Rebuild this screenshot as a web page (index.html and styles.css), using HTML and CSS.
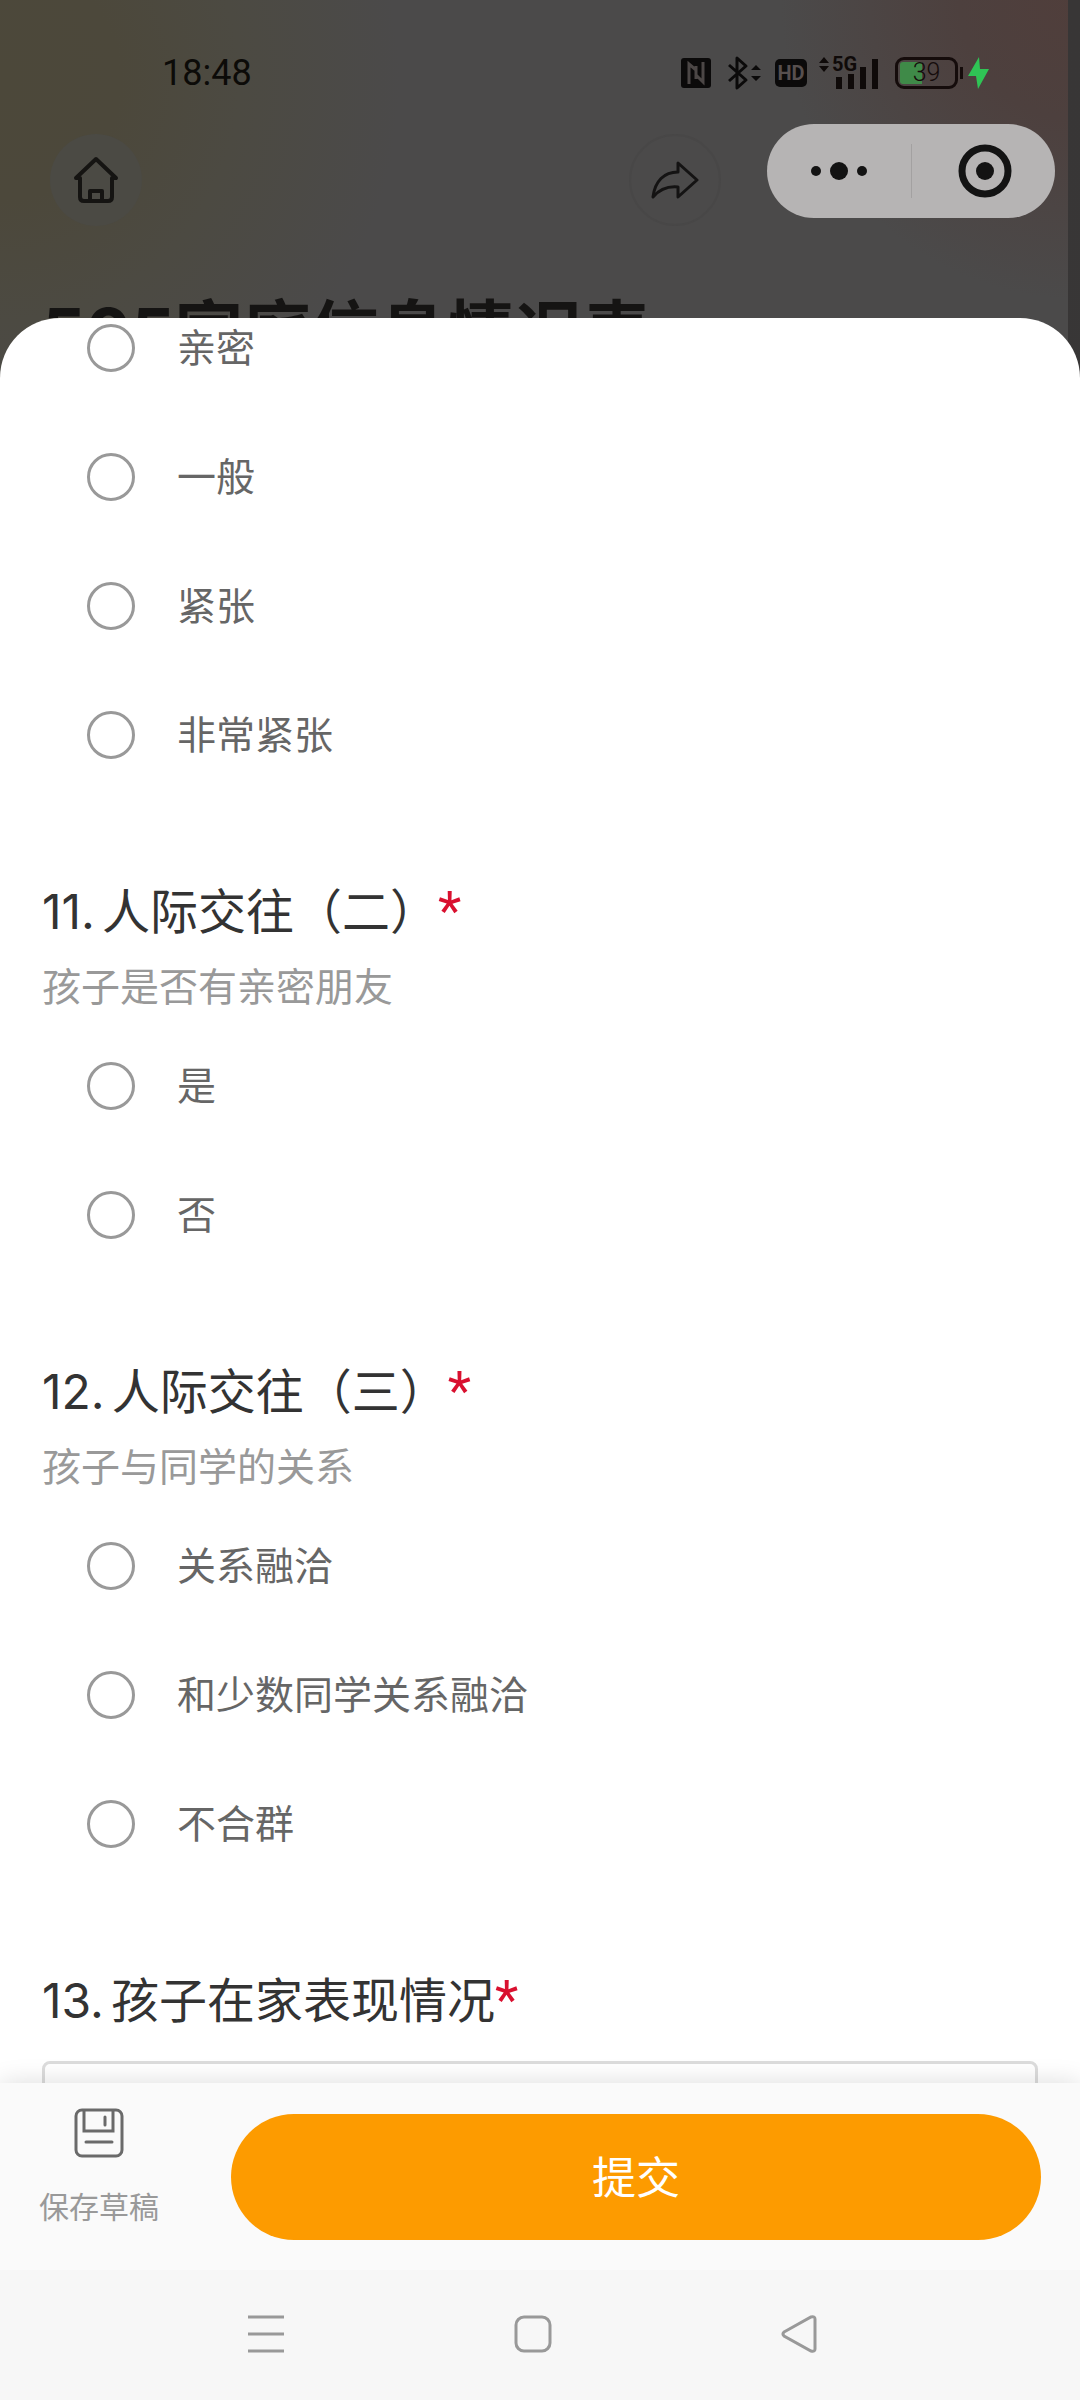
FILE: index.html
```html
<!DOCTYPE html>
<html lang="zh-CN">
<head>
<meta charset="utf-8">
<meta name="viewport" content="width=device-width, initial-scale=1">
<title>505家庭信息情况表</title>
<link rel="stylesheet" href="styles.css">
</head>
<body>
<header class="header">
  <div class="status">
    <time class="clock">18:48</time>
    <div class="indicators">
      <svg class="nfc" width="30" height="30" viewBox="0 0 30 30"><rect width="30" height="30" rx="3" fill="#0b0a0a"/><path d="M8 26V6l7 6v9M22 4v20l-7-7V8" fill="none" stroke="#4c4746" stroke-width="3"/></svg>
      <svg class="bluetooth" width="32" height="34" viewBox="0 0 32 34"><path d="M1 9l17 15-9 8V2l9 8L1 25" fill="none" stroke="#0b0a0a" stroke-width="3" stroke-linejoin="round"/><path d="M23 14l5-5 5 5zM23 20l5 5 5-5z" fill="#0b0a0a"/></svg>
      <span class="hd">HD</span>
      <span class="signal">
        <svg width="62" height="34" viewBox="0 0 62 34"><path d="M1 7l5-6 5 6zM1 10l5 6 5-6z" fill="#0f0a09"/><path d="M18 21h6v12h-6zM30 18h6v15h-6zM42 11h6v22h-6zM54 3h6v30h-6z" fill="#0f0a09"/></svg>
        <span class="network">5G</span>
      </span>
      <span class="battery"><span class="level">39</span></span>
      <svg class="bolt" width="22" height="32" viewBox="0 0 22 32"><path d="M11 0L0 19h8l2 13 11-20h-9z" fill="#2fc455"/></svg>
    </div>
  </div>
  <div class="toolbar">
    <button class="round home" type="button" aria-label="首页">
      <svg width="48" height="48" viewBox="0 0 48 48" fill="none" stroke="#151412" stroke-width="4" stroke-linecap="round" stroke-linejoin="round"><path d="M8 22H4L24 3l20 19h-4M8 22v19q0 4 4 4h24q4 0 4-4V22M18 45V35h12v10"/></svg>
    </button>
    <div class="tools">
      <button class="round share" type="button" aria-label="分享">
        <svg width="48" height="40" viewBox="0 0 48 40" fill="none" stroke="#141313" stroke-width="3" stroke-linejoin="round"><path d="M27 3l19 17-19 17V27C17 26 8 30 2 37 4 21 13 12 27 12z"/></svg>
      </button>
      <div class="capsule">
        <button class="half" type="button" aria-label="更多"><svg width="60" height="60" viewBox="0 0 60 60" fill="#131313"><circle cx="7" cy="30" r="5"/><circle cx="30" cy="30" r="9"/><circle cx="53" cy="30" r="5"/></svg></button>
        <button class="half" type="button" aria-label="关闭"><svg width="60" height="60" viewBox="0 0 60 60"><circle cx="32" cy="30" r="23" fill="none" stroke="#131313" stroke-width="7"/><circle cx="32" cy="30" r="9" fill="#131313"/></svg></button>
      </div>
    </div>
  </div>
  <h1 class="title">505家庭信息情况表</h1>
</header>

<form class="sheet">
  <div class="questions">
    <fieldset class="question">
      <label class="option"><input type="radio" name="q10"><span>亲密</span></label>
      <label class="option"><input type="radio" name="q10"><span>一般</span></label>
      <label class="option"><input type="radio" name="q10"><span>紧张</span></label>
      <label class="option"><input type="radio" name="q10"><span>非常紧张</span></label>
    </fieldset>
    <fieldset class="question">
      <legend class="heading"><span class="number">11.</span>人际交往（二）<span class="required">*</span></legend>
      <p class="hint">孩子是否有亲密朋友</p>
      <label class="option"><input type="radio" name="q11"><span>是</span></label>
      <label class="option"><input type="radio" name="q11"><span>否</span></label>
    </fieldset>
    <fieldset class="question">
      <legend class="heading"><span class="number">12.</span>人际交往（三）<span class="required">*</span></legend>
      <p class="hint">孩子与同学的关系</p>
      <label class="option"><input type="radio" name="q12"><span>关系融洽</span></label>
      <label class="option"><input type="radio" name="q12"><span>和少数同学关系融洽</span></label>
      <label class="option"><input type="radio" name="q12"><span>不合群</span></label>
    </fieldset>
    <div class="question">
      <label class="heading" for="q13"><span class="number">13.</span>孩子在家表现情况<span class="required">*</span></label>
      <textarea class="answer" id="q13"></textarea>
    </div>
  </div>
  <div class="actions">
    <button class="draft" type="button">
      <svg width="50" height="50" viewBox="0 0 50 50" fill="none" stroke="#6a6a6a" stroke-width="3" stroke-linecap="round"><rect x="2" y="2" width="46" height="46" rx="6"/><path d="M10 3v20h29V3M31 9v8M12 34h26"/></svg>
      <span>保存草稿</span>
    </button>
    <button class="submit" type="submit">提交</button>
  </div>
</form>

<nav class="system">
  <button type="button" aria-label="最近任务"><svg width="40" height="40" viewBox="0 0 40 40" stroke="#999" stroke-width="3"><path d="M2 3h36M2 20h36M2 37h36"/></svg></button>
  <button type="button" aria-label="主屏幕"><svg width="40" height="40" viewBox="0 0 40 40" fill="none" stroke="#999" stroke-width="3"><rect x="3" y="3" width="34" height="34" rx="8"/></svg></button>
  <button type="button" aria-label="返回"><svg width="40" height="40" viewBox="0 0 40 40" fill="none" stroke="#999" stroke-width="3"><path d="M4 18L31 3q4-1 4 2v30q0 3-4 2L4 22q-2-2 0-4z"/></svg></button>
</nav>
</body>
</html>
```
FILE: styles.css
```css
* {
  box-sizing: border-box;
}

body {
  margin: 0;
  height: 100vh;
  display: flex;
  flex-direction: column;
  overflow: hidden;
  font-family: "Noto Sans CJK SC", sans-serif;
  font-weight: 400;
  color: #333;
  background:
    linear-gradient(#383636, #383838) right / 12px 100% no-repeat,
    radial-gradient(circle at 0 80px, #4c483a 0, #4c483b 120px, #4c4a42 240px, rgba(75, 75, 75, 0) 400px),
    radial-gradient(circle at 100% 0, #503e3b 0, #4d403e 120px, rgba(75, 74, 74, 0) 300px),
    #4b4a4a;
}

button {
  padding: 0;
  border: 0;
  background: none;
  font: inherit;
  color: inherit;
}

svg {
  display: block;
}

.header {
  height: 318px;
  flex: none;
}

.status {
  height: 124px;
  padding: 21px 90px 0 162px;
  display: flex;
  align-items: center;
  justify-content: space-between;
}

.clock {
  font: 400 36px/40px Roboto, sans-serif;
  color: #0c0b08;
}

.indicators {
  display: flex;
  align-items: center;
}

.bluetooth {
  margin: 0 15px 0 17px;
  overflow: visible;
}

.hd {
  width: 32px;
  border-radius: 5px;
  background: #0b0a0a;
  color: #574f4e;
  font: 700 20px/28px Roboto, sans-serif;
  text-align: center;
}

.signal {
  position: relative;
  margin: 0 15px 0 11px;
}

.network {
  position: absolute;
  left: 14px;
  top: -2px;
  font: 700 20px/20px Roboto, sans-serif;
  color: #0f0a09;
}

.battery {
  position: relative;
  width: 63px;
  height: 32px;
  padding: 2px;
  border: 3px solid #150c0b;
  border-radius: 9px;
}

.battery::after {
  content: "";
  position: absolute;
  right: -8px;
  top: 7px;
  width: 3px;
  height: 12px;
  background: #150c0b;
}

.level {
  display: block;
  border-radius: 3px;
  background: linear-gradient(#3f8a48, #3f8a48) left / 22px 100% no-repeat;
  color: #150c0b;
  font: 300 25px/22px Roboto, sans-serif;
  text-align: center;
}

.bolt {
  margin-left: 10px;
}

.toolbar {
  height: 94px;
  padding: 0 25px 0 50px;
  display: flex;
  align-items: center;
  justify-content: space-between;
}

.round {
  width: 92px;
  height: 92px;
  margin-top: 18px;
  border-radius: 50%;
  display: grid;
  place-items: center;
}

.home {
  background: #4b4a44;
}

.share {
  border: 2px solid #484747;
}

.tools {
  display: flex;
  align-items: center;
  gap: 46px;
}

.capsule {
  width: 288px;
  height: 94px;
  display: flex;
  border-radius: 47px;
  background: #b6b4b4;
}

.half {
  flex: 1;
  display: grid;
  place-items: center;
}

.half + .half {
  position: relative;
}

.half + .half::before {
  content: "";
  position: absolute;
  left: 0;
  top: 20px;
  bottom: 20px;
  width: 1px;
  background: #a3a1a1;
}

.title {
  margin: 0;
  padding: 71px 42px 0;
  height: 100px;
  overflow: hidden;
  white-space: nowrap;
  font-family: Inter, "Noto Sans CJK SC", sans-serif;
  font-size: 68px;
  line-height: 86px;
  font-weight: 700;
  color: #151413;
}

.sheet {
  flex: 1;
  min-height: 0;
  margin: 0;
  display: flex;
  flex-direction: column;
  overflow: hidden;
  border-radius: 60px 60px 0 0;
  background: #fff;
}

.questions {
  flex: 1;
  min-height: 0;
  overflow: hidden;
  padding: 0 42px;
}

.question {
  margin: 0 0 110px;
  padding: 0;
  border: 0;
  min-width: 0;
}

.heading {
  display: block;
  padding: 0 0 8px;
  font-size: 48px;
  line-height: 66px;
}

.number {
  margin-right: 7px;
  font-family: Inter, sans-serif;
  line-height: 1;
}

.required {
  font-family: Roboto, sans-serif;
  font-size: 54px;
  line-height: 1;
  color: #d9102f;
}

.hint {
  margin: 8px 0 45px;
  font-size: 39px;
  line-height: 54px;
  color: #999;
}

.option {
  height: 60px;
  padding-left: 45px;
  display: flex;
  align-items: center;
  font-size: 39px;
  line-height: 54px;
  color: #666;
}

.option span {
  padding-bottom: 6px;
}

.option + .option {
  margin-top: 69px;
}

.option input {
  appearance: none;
  width: 48px;
  height: 48px;
  margin: 0 42px 0 0;
  border: 3px solid #999;
  border-radius: 50%;
}

.answer {
  display: block;
  width: 100%;
  height: 240px;
  margin-top: 23px;
  border: 3px solid #dcdcdc;
  border-radius: 8px;
  resize: none;
}

.actions {
  position: relative;
  flex: none;
  height: 187px;
  padding: 0 39px;
  display: flex;
  align-items: center;
  gap: 72px;
  background: #fafafa;
  box-shadow: 0 0 24px rgba(0, 0, 0, 0.14);
}

.draft {
  width: 120px;
  padding-bottom: 18px;
  display: flex;
  flex-direction: column;
  align-items: center;
  gap: 25px;
  font-size: 30px;
  line-height: 44px;
  color: #999;
}

.submit {
  flex: 1;
  height: 126px;
  padding-bottom: 4px;
  border-radius: 63px;
  background: #fd9b00;
  color: #fff;
  font-size: 44px;
}

.system {
  flex: none;
  height: 130px;
  padding: 0 147px 2px 132px;
  display: grid;
  grid-template-columns: repeat(3, 1fr);
  place-items: center;
  background: #f7f7f7;
}
```
